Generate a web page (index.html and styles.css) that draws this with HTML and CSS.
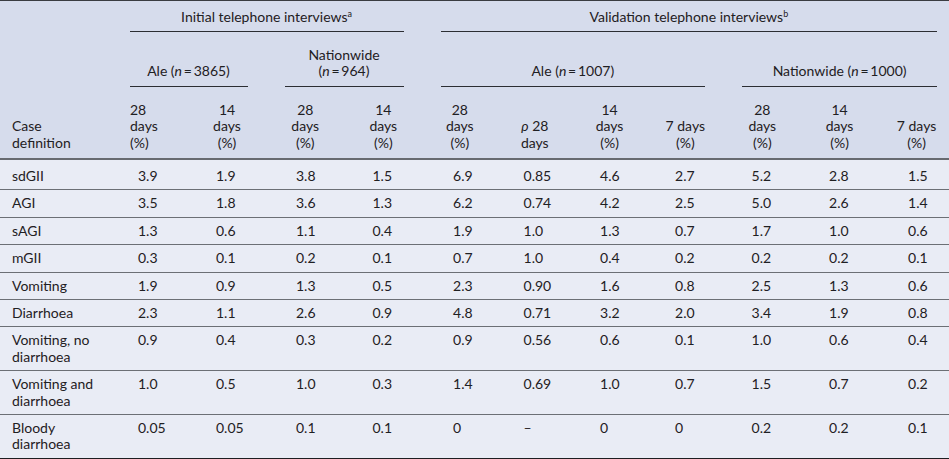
FILE: index.html
```html
<!DOCTYPE html>
<html lang="en">
<head>
<meta charset="utf-8">
<title>Case definitions table</title>
<link rel="stylesheet" href="styles.css">
</head>
<body>
<table class="data-table">
  <colgroup>
    <col class="w-label">
    <col class="w-77"><col class="w-78"><col class="w-785"><col class="w-775">
    <col class="w-755"><col class="w-745"><col class="w-75"><col class="w-765">
    <col class="w-775"><col class="w-77"><col class="w-71">
  </colgroup>
  <thead>
    <tr class="grp-row">
      <th class="case" rowspan="3">Case<br>definition</th>
      <th colspan="4"><div class="rule">Initial telephone interviews<sup>a</sup></div></th>
      <th colspan="7" class="last"><div class="rule">Validation telephone interviews<sup>b</sup></div></th>
    </tr>
    <tr class="sub-row">
      <th colspan="2"><div class="rule">Ale (<i>n</i>&thinsp;=&thinsp;3865)</div></th>
      <th colspan="2"><div class="rule">Nationwide<br>(<i>n</i>&thinsp;=&thinsp;964)</div></th>
      <th colspan="4"><div class="rule">Ale (<i>n</i>&thinsp;=&thinsp;1007)</div></th>
      <th colspan="3" class="last"><div class="rule">Nationwide (<i>n</i>&thinsp;=&thinsp;1000)</div></th>
    </tr>
    <tr class="col-row">
      <th class="lead">28<br>days<br>(%)</th>
      <th>14<br>days<br>(%)</th>
      <th>28<br>days<br>(%)</th>
      <th>14<br>days<br>(%)</th>
      <th>28<br>days<br>(%)</th>
      <th><i>ρ</i> 28<br>days</th>
      <th>14<br>days<br>(%)</th>
      <th>7 days<br>(%)</th>
      <th>28<br>days<br>(%)</th>
      <th>14<br>days<br>(%)</th>
      <th class="last">7 days<br>(%)</th>
    </tr>
  </thead>
  <tbody>
    <tr><td class="label">sdGII</td><td>3.9</td><td>1.9</td><td>3.8</td><td>1.5</td><td>6.9</td><td>0.85</td><td>4.6</td><td>2.7</td><td>5.2</td><td>2.8</td><td>1.5</td></tr>
    <tr><td class="label">AGI</td><td>3.5</td><td>1.8</td><td>3.6</td><td>1.3</td><td>6.2</td><td>0.74</td><td>4.2</td><td>2.5</td><td>5.0</td><td>2.6</td><td>1.4</td></tr>
    <tr><td class="label">sAGI</td><td>1.3</td><td>0.6</td><td>1.1</td><td>0.4</td><td>1.9</td><td>1.0</td><td>1.3</td><td>0.7</td><td>1.7</td><td>1.0</td><td>0.6</td></tr>
    <tr><td class="label">mGII</td><td>0.3</td><td>0.1</td><td>0.2</td><td>0.1</td><td>0.7</td><td>1.0</td><td>0.4</td><td>0.2</td><td>0.2</td><td>0.2</td><td>0.1</td></tr>
    <tr><td class="label">Vomiting</td><td>1.9</td><td>0.9</td><td>1.3</td><td>0.5</td><td>2.3</td><td>0.90</td><td>1.6</td><td>0.8</td><td>2.5</td><td>1.3</td><td>0.6</td></tr>
    <tr><td class="label">Diarrhoea</td><td>2.3</td><td>1.1</td><td>2.6</td><td>0.9</td><td>4.8</td><td>0.71</td><td>3.2</td><td>2.0</td><td>3.4</td><td>1.9</td><td>0.8</td></tr>
    <tr><td class="label">Vomiting, no<br>diarrhoea</td><td>0.9</td><td>0.4</td><td>0.3</td><td>0.2</td><td>0.9</td><td>0.56</td><td>0.6</td><td>0.1</td><td>1.0</td><td>0.6</td><td>0.4</td></tr>
    <tr><td class="label">Vomiting and<br>diarrhoea</td><td>1.0</td><td>0.5</td><td>1.0</td><td>0.3</td><td>1.4</td><td>0.69</td><td>1.0</td><td>0.7</td><td>1.5</td><td>0.7</td><td>0.2</td></tr>
    <tr><td class="label">Bloody<br>diarrhoea</td><td>0.05</td><td>0.05</td><td>0.1</td><td>0.1</td><td>0</td><td>–</td><td>0</td><td>0</td><td>0.2</td><td>0.2</td><td>0.1</td></tr>
  </tbody>
</table>
</body>
</html>
```

FILE: styles.css
```css
html, body {
  margin: 0;
  padding: 0;
  background: #e9ecf5;
  overflow: hidden;
}

body {
  font-family: Lato, "Noto Sans", sans-serif;
  font-size: 14px;
  color: #1f2023;
}

.data-table {
  width: 949px;
  border-collapse: collapse;
  table-layout: fixed;
  border-top: 1px solid #3a3c41;
  border-bottom: 2px solid #1d1e21;
}

.w-label { width: 111px; }
.w-77 { width: 77px; }
.w-78 { width: 78px; }
.w-785 { width: 78.5px; }
.w-775 { width: 77.5px; }
.w-755 { width: 75.5px; }
.w-745 { width: 74.5px; }
.w-75 { width: 75px; }
.w-765 { width: 76.5px; }
.w-71 { width: 71px; }

.data-table thead {
  background: #d6dcec;
}

.data-table tbody {
  background: #e9ecf5;
}

.data-table th {
  font-weight: 400;
  line-height: 16.5px;
  vertical-align: bottom;
  text-align: center;
  padding: 0;
}

.data-table sup {
  font-size: 9px;
  line-height: 0;
  vertical-align: 5px;
}

.rule {
  border-bottom: 1px solid #2c2e33;
}

.grp-row th {
  padding: 8px 18.5px 0;
}

.grp-row .rule {
  padding-bottom: 5px;
}

.sub-row th {
  padding: 15px 18.5px 0;
}

.sub-row .rule {
  padding-bottom: 6px;
}

.grp-row th.last,
.sub-row th.last {
  padding-right: 12px;
}

.data-table th.case {
  text-align: left;
  padding: 0 0 7px 12px;
  border-bottom: 2px solid #676a70;
}

.col-row th {
  padding: 15px 4px 7px;
  border-bottom: 2px solid #676a70;
}

.col-row th.lead {
  text-align: left;
  padding-left: 19px;
}

.col-row th.last {
  padding-left: 6px;
  padding-right: 0;
}

.data-table td {
  padding: 5px 2px 5px 28px;
  line-height: 16.4px;
  text-align: left;
  vertical-align: top;
  border-bottom: 1px solid #6c6f75;
  white-space: nowrap;
}

.data-table td.label {
  padding-left: 12px;
}

.data-table td:nth-child(2) { padding-left: 27px; }
.data-table td:nth-child(4) { padding-left: 30px; }
.data-table td:nth-child(6) { padding-left: 31px; }
.data-table td:nth-child(7) { padding-left: 26px; }
.data-table td:nth-child(12) { padding-left: 30px; }

.data-table tbody tr:first-child td {
  padding-top: 8px;
}
```
